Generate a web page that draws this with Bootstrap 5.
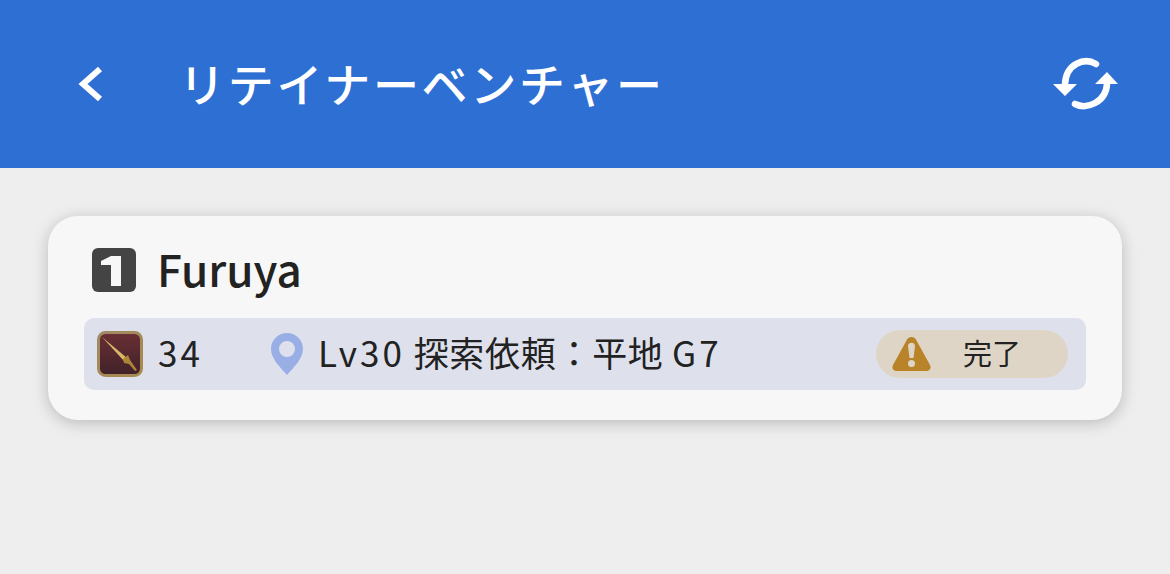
<!DOCTYPE html>
<html lang="ja">
<head>
  <meta charset="UTF-8">
  <title>リテイナーベンチャー</title>
  <link rel="stylesheet" href="https://cdn.jsdelivr.net/npm/bootstrap@5.3.3/dist/css/bootstrap.min.css">
  <style>
    body {
      background: #eeeeee;
      color: #222222;
      font-family: "Noto Sans CJK JP", "Noto Sans", sans-serif;
      height: 574px;
      overflow: hidden;
    }
    .app-header {
      background: #2e6fd3;
      height: 168px;
      padding: 0 50px 0 76px;
    }
    .app-title {
      font-size: 46px;
      font-weight: 500;
      line-height: 1;
      margin: -4px 0 0 75px;
      color: #fff;
      letter-spacing: 2.7px;
    }
    .retainer-box {
      margin: 48px 48px 0;
      height: 204px;
      background: #f7f7f7;
      border-radius: 30px;
      box-shadow: 0 3px 16px rgba(0, 0, 0, .22);
      padding: 30px 36px 0;
    }
    .retainer-name {
      font-size: 44px;
      line-height: 48px;
      font-weight: 500;
      height: 48px;
      padding-left: 8px;
      gap: 21px;
    }
    .retainer-name span { margin-top: -5px; }
    .venture-row {
      background: #dee0ec;
      border-radius: 10px;
      height: 72px;
      margin-top: 24px;
      padding: 0 18px 0 13px;
      font-size: 35px;
    }
    .level-text { width: 113px; margin: -3px 0 0 15px; letter-spacing: 3px; }
    .venture-text { margin: -3px 0 0 15px; letter-spacing: .7px; white-space: nowrap; }
    .wide-latin { letter-spacing: 3.1px; }
    .done-pill {
      background: #ded5c6;
      border-radius: 24px;
      width: 192px;
      height: 48px;
      padding-left: 16px;
      font-size: 29px;
    }
    .done-pill span { margin: -3px 0 0 32px; }
  </style>
</head>
<body>
  <header class="app-header d-flex align-items-center">
    <svg width="28" height="40" viewBox="0 0 28 40"><path d="M24 5 L7 20 L24 35" fill="none" stroke="#fff" stroke-width="6"/></svg>
    <h1 class="app-title flex-grow-1">リテイナーベンチャー</h1>
    <svg width="68" height="54" viewBox="0 0 68 54">
      <g fill="none" stroke="#fff" stroke-width="6.500" stroke-linecap="round">
        <path d="M44 7 C32 0 14 7 13 27"/>
        <path d="M23 47 C35 53 54 45 55 27"/>
      </g>
      <path d="M1 27 H25 L13 39 Z M66 27 H43 L55 15 Z" fill="#fff"/>
    </svg>
  </header>

  <section class="retainer-box">
    <div class="retainer-name d-flex align-items-center">
      <svg width="44" height="44" viewBox="0 0 44 44">
        <rect width="44" height="44" rx="6" fill="#444444"/>
        <path d="M9 13 L19 8 H29 V38 H19 V17 H9 Z" fill="#f7f7f7"/>
      </svg>
      <span>Furuya</span>
    </div>
    <div class="venture-row d-flex align-items-center">
      <svg width="46" height="46" viewBox="0 0 46 46">
        <defs>
          <linearGradient id="jobBg" x1="0" y1="0" x2="0" y2="1">
            <stop offset="0" stop-color="#6a3035"/>
            <stop offset="1" stop-color="#3f2128"/>
          </linearGradient>
          <linearGradient id="jobRim" x1="0" y1="0" x2="1" y2="1">
            <stop offset="0" stop-color="#a08a64"/>
            <stop offset="1" stop-color="#a98a4e"/>
          </linearGradient>
        </defs>
        <rect x="1.500" y="1.500" width="43" height="43" rx="7" fill="url(#jobBg)" stroke="url(#jobRim)" stroke-width="3"/>
        <path d="M5 6 L30 27 L27 30 Z" fill="#d8b768"/>
        <path d="M27 32 L26 28 L31 24 L33 29 L40 39 L38 40 L32 33 Z" fill="#ac8538"/>
      </svg>
      <div class="level-text">34</div>
      <svg width="32" height="42" viewBox="0 0 32 42">
        <path fill-rule="evenodd" d="M16 0 C7 0 0 7 0 16 C0 26 10 35 16 42 C22 35 32 26 32 16 C32 7 25 0 16 0 Z M16 8 A8 8 0 1 1 16 24 A8 8 0 1 1 16 8 Z" fill="#9aaee6"/>
      </svg>
      <div class="venture-text flex-grow-1"><span class="wide-latin">Lv30</span> 探索依頼：平地 <span class="wide-latin">G7</span></div>
      <div class="done-pill d-flex align-items-center">
        <svg width="39" height="34" viewBox="0 0 39 34">
          <path fill-rule="evenodd" d="M19.500 0 C22 0 23.500 1.500 24.500 3.500 L38 28 C39.500 31 38 34 35 34 H4 C1 34 -.5 31 1 28 L14.500 3.500 C15.500 1.500 17 0 19.500 0 Z M16 9 L17.500 21 H21.500 L23 9 C23 4.500 16 4.500 16 9 Z M19.500 23 A3.500 3.500 0 1 0 19.500 30 A3.500 3.500 0 1 0 19.500 23 Z" fill="#b9832a"/>
        </svg>
        <span>完了</span>
      </div>
    </div>
  </section>

  <script src="https://cdn.jsdelivr.net/npm/bootstrap@5.3.3/dist/js/bootstrap.bundle.min.js"></script>
</body>
</html>
